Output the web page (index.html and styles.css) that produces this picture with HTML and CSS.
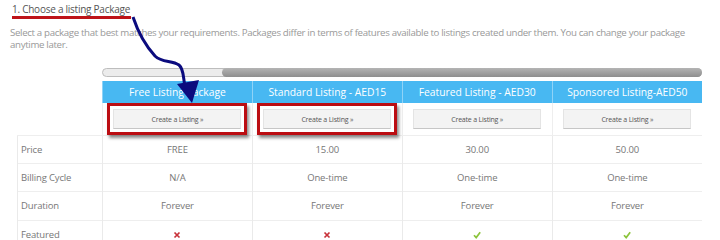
FILE: index.html
```html
<!DOCTYPE html>
<html lang="en">
<head>
  <meta charset="UTF-8">
  <title>Choose a listing Package</title>
  <link rel="stylesheet" href="styles.css">
</head>
<body>
  <div class="page">
    <h3 class="step">1. Choose a listing Package</h3>
    <p class="intro">Select a package that best matches your requirements. Packages differ in terms of features available to listings created under them. You can change your package anytime later.</p>

    <div class="scroller"><div class="thumb"></div></div>

    <table class="packages">
      <colgroup>
        <col class="col-label">
        <col><col><col><col>
      </colgroup>
      <thead>
        <tr class="heads">
          <th class="blank"></th>
          <th>Free Listing Package</th>
          <th>Standard Listing - AED15</th>
          <th>Featured Listing - AED30</th>
          <th>Sponsored Listing-AED50</th>
        </tr>
        <tr class="actions">
          <td class="blank"></td>
          <td><span class="pick marked"><a href="#" class="btn">Create a Listing &raquo;</a></span></td>
          <td><span class="pick marked"><a href="#" class="btn">Create a Listing &raquo;</a></span></td>
          <td><span class="pick"><a href="#" class="btn">Create a Listing &raquo;</a></span></td>
          <td><span class="pick"><a href="#" class="btn">Create a Listing &raquo;</a></span></td>
        </tr>
      </thead>
      <tbody>
        <tr>
          <td class="label">Price</td>
          <td>FREE</td><td>15.00</td><td>30.00</td><td>50.00</td>
        </tr>
        <tr>
          <td class="label">Billing Cycle</td>
          <td>N/A</td><td>One-time</td><td>One-time</td><td>One-time</td>
        </tr>
        <tr>
          <td class="label">Duration</td>
          <td>Forever</td><td>Forever</td><td>Forever</td><td>Forever</td>
        </tr>
        <tr>
          <td class="label">Featured</td>
          <td><svg class="ico" viewBox="0 0 8 8"><path class="no" d="M1.5 1.5L6.5 6.5M6.5 1.5L1.5 6.5"/></svg></td>
          <td><svg class="ico" viewBox="0 0 8 8"><path class="no" d="M1.5 1.5L6.5 6.5M6.5 1.5L1.5 6.5"/></svg></td>
          <td><svg class="ico" viewBox="0 0 8 8"><path class="yes" d="M1 4.2L3.2 6.6L7.2 1.2"/></svg></td>
          <td><svg class="ico" viewBox="0 0 8 8"><path class="yes" d="M1 4.2L3.2 6.6L7.2 1.2"/></svg></td>
        </tr>
      </tbody>
    </table>

    <!-- hand-drawn annotation on top of the screenshot -->
    <svg class="annot" width="720" height="240" viewBox="0 0 720 240">
      <path class="mark" d="M12 17.5L131 17.5"/>
      <path class="arrow" d="M133 17C138 32 145 45 155 56C162 63 172 60 179 65C184 69 183 78 185 86"/>
      <polygon class="arrow-head" points="177,84 199,80 192,103"/>
    </svg>
  </div>
</body>
</html>
```

FILE: styles.css
```css
body {
  margin: 0;
  font-family: "Open Sans", "Noto Sans", sans-serif;
  color: #777;
  background: #fff;
}
.page {
  position: relative;
  padding: 0 10px;
}
.step {
  margin: 0;
  padding: 2px 0 0 2px;
  font-size: 10px;
  letter-spacing: -0.25px;
  line-height: 14px;
  font-weight: normal;
  color: #555;
}
.intro {
  width: 700px;
  margin: 11px 0 0;
  font-size: 9.7px;
  letter-spacing: -0.34px;
  line-height: 11.5px;
  color: #999;
}
.scroller {
  display: flex;
  justify-content: flex-end;
  box-sizing: border-box;
  width: 600px;
  height: 9px;
  margin: 18px 0 0 92px;
  background: #ececec;
  border: 1px solid #bdbdbd;
  border-radius: 5px;
}
.thumb {
  width: 480px;
  margin: -1px;
  background: linear-gradient(#b4b4b4, #8e8e8e);
  border-radius: 5px;
}
.packages {
  width: 685px;
  margin: 4px 0 0 7px;
  border-collapse: collapse;
  table-layout: fixed;
}
.col-label {
  width: 85px;
}
.heads th {
  height: 22px;
  padding: 0;
  background: #48b8f2;
  color: #fff;
  font-size: 10.3px;
  font-weight: normal;
  border-left: 1px solid #8fd3f7;
}
.heads th.blank {
  background: none;
  border: none;
}
.actions td {
  height: 32px;
  padding: 0;
  text-align: center;
  border-left: 1px solid #eee;
  border-bottom: 1px solid #eee;
}
.actions td.blank {
  border-left: none;
  border-bottom: 1px solid #eee;
}
.pick {
  display: inline-block;
  padding: 3px;
  border: 3px solid transparent;
  vertical-align: middle;
}
.pick.marked {
  border-color: #bb0d12;
  box-shadow: 2px 3px 3px rgba(0, 0, 0, 0.45);
}
.btn {
  display: block;
  box-sizing: border-box;
  width: 128px;
  height: 20px;
  line-height: 19px;
  background: #f3f3f3;
  border: 1px solid #e4e4e4;
  border-bottom-color: #c6c6c6;
  color: #555;
  font-size: 7px;
  letter-spacing: -0.2px;
  text-decoration: none;
}
tbody td {
  height: 27.2px;
  padding: 0;
  text-align: center;
  font-size: 9.5px;
  letter-spacing: -0.15px;
  color: #777;
  border-top: 1px solid #eee;
  border-left: 1px solid #eaeaea;
}
tbody td.label {
  padding-left: 3px;
  text-align: left;
}
.ico {
  width: 8px;
  height: 8px;
  vertical-align: middle;
}
.ico path {
  fill: none;
  stroke-width: 1.7;
}
.ico .no {
  stroke: #c8323a;
}
.ico .yes {
  stroke: #8cc43c;
}
.annot {
  position: absolute;
  left: 0;
  top: 0;
  pointer-events: none;
}
.annot .mark {
  stroke: #be1419;
  stroke-width: 3;
}
.annot .arrow {
  fill: none;
  stroke: #0b0b7e;
  stroke-width: 3;
}
.annot .arrow-head {
  fill: #0b0b7e;
}
```
